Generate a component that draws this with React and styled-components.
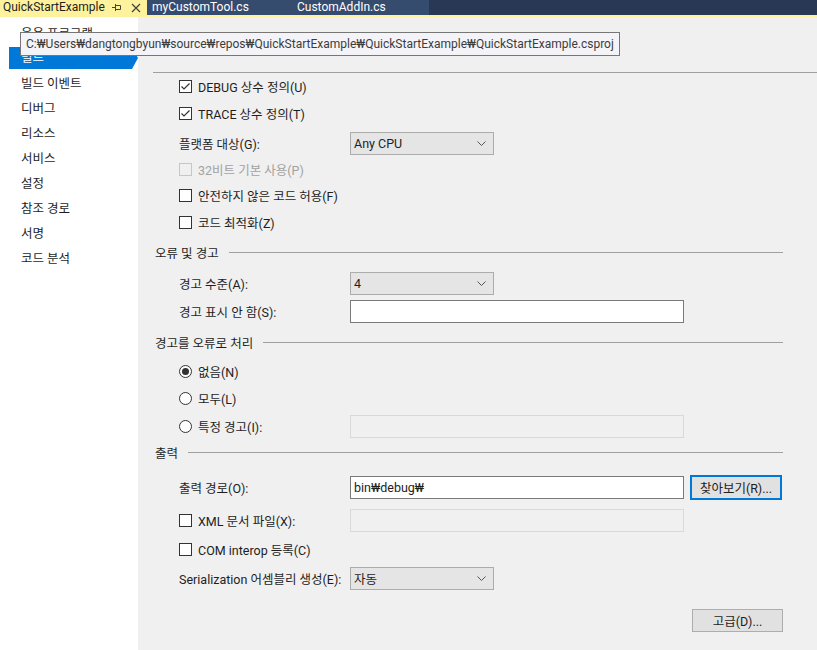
import React from "react";
import styled, { createGlobalStyle } from "styled-components";

const GlobalStyle = createGlobalStyle`
  html, body { margin: 0; padding: 0; }
  body {
    font-family: Roboto, "Noto Sans", "Noto Sans CJK KR", sans-serif;
    font-size: 12.5px;
    color: #1e1e1e;
    background: #f0f0f0;
  }
  * { box-sizing: border-box; }
`;

const Window = styled.div`
  width: 817px;
  height: 650px;
  position: relative;
  overflow: hidden;
  display: flex;
  flex-direction: column;
  background: #f0f0f0;
`;

/* ---------- document tabs ---------- */
const TabBar = styled.div`
  display: flex;
  height: 17px;
  background: #293955;
  border-bottom: 2px solid #fff29d;
`;

const Tab = styled.div`
  width: ${(p) => p.$w}px;
  height: 15px;
  display: flex;
  align-items: center;
  padding-left: ${(p) => p.$pl}px;
  font-size: 12px;
  line-height: 15px;
  white-space: nowrap;
  background: ${(p) => (p.$active ? "#fff29d" : "#364c6e")};
  color: ${(p) => (p.$active ? "#1e1e1e" : "#ffffff")};
`;

const TabIcons = styled.div`
  display: flex;
  align-items: center;
  gap: 10px;
  margin-left: auto;
  margin-right: 6px;
`;

const PinIcon = () => (
  <svg width="9" height="9" viewBox="0 0 9 9">
    <path d="M0 4.5H3M3.5 1V8M3.5 2.5H8.5V6.5H3.5" fill="none" stroke="#444" strokeWidth="1" />
  </svg>
);

const CloseIcon = () => (
  <svg width="10" height="10" viewBox="0 0 10 10">
    <path d="M1 1L9 9M9 1L1 9" stroke="#444" strokeWidth="1.3" />
  </svg>
);

/* ---------- body ---------- */
const Body = styled.div`
  flex: 1;
  display: flex;
  position: relative;
`;

const Sidebar = styled.nav`
  width: 138px;
  background: #ffffff;
  padding-top: 5px;
`;

const NavItem = styled.div`
  height: 22px;
  margin-bottom: 3px;
  line-height: 24px;
  padding-left: 21px;
  white-space: nowrap;
  color: ${(p) => (p.$active ? "#ffffff" : "#1e1e1e")};
  ${(p) =>
    p.$active &&
    `
    margin-left: 9px;
    padding-left: 12px;
    width: 129px;
    line-height: 22px;
    background: #0078d7;
    clip-path: polygon(0 0, calc(100% - 6px) 0, 100% 50%, calc(100% - 6px) 100%, 0 100%);
  `}
`;

const Tooltip = styled.div`
  position: absolute;
  left: 20px;
  top: 15px;
  height: 24px;
  padding: 0 5px;
  font-size: 12px;
  line-height: 22px;
  white-space: nowrap;
  background: #f4f4f8;
  border: 1px solid #767676;
  color: #3c3c3c;
`;

const Content = styled.main`
  flex: 1;
  padding: 0 34px 0 15px;
  display: flex;
  flex-direction: column;
`;

const TopRule = styled.div`
  margin-top: 55px;
  margin-right: -34px;
  height: 1px;
  background: #a0a0a0;
`;

const SectionHeader = styled.div`
  display: flex;
  align-items: center;
  height: 24px;
  margin-top: ${(p) => p.$mt}px;
  padding-left: 2px;
  white-space: nowrap;

  &::after {
    content: "";
    flex: 1;
    height: 1px;
    margin-left: 10px;
    background: #a0a0a0;
  }
`;

const Row = styled.div`
  display: flex;
  align-items: center;
  height: 24px;
  margin-top: ${(p) => p.$mt}px;
  padding-left: 26px;
`;

const Label = styled.div`
  flex: 0 0 171px;
  white-space: nowrap;
  display: flex;
  align-items: center;
  gap: 6px;
  color: ${(p) => (p.$disabled ? "#a2a2a2" : "#1e1e1e")};
`;

const Box = styled.span`
  width: 13px;
  height: 13px;
  flex: 0 0 13px;
  display: flex;
  align-items: center;
  justify-content: center;
  border: 1px solid ${(p) => (p.$disabled ? "#c6c6c6" : "#333333")};
  border-radius: ${(p) => (p.$round ? "50%" : "0")};
  background: ${(p) => (p.$disabled ? "#f0f0f0" : "#ffffff")};
`;

const Dot = styled.span`
  width: 7px;
  height: 7px;
  border-radius: 50%;
  background: #333333;
`;

const Check = ({ checked, disabled }) => (
  <Box $disabled={disabled}>
    {checked && (
      <svg width="11" height="11" viewBox="0 0 11 11">
        <path d="M1.5 5.5L4 8L9.5 2.5" fill="none" stroke="#333" strokeWidth="1.2" />
      </svg>
    )}
  </Box>
);

const Radio = ({ checked }) => <Box $round>{checked && <Dot />}</Box>;

const Select = styled.div`
  width: 144px;
  height: 23px;
  display: flex;
  align-items: center;
  justify-content: space-between;
  padding: 0 7px 0 3px;
  background: #e5e5e5;
  border: 1px solid #acacac;
`;

const Chevron = () => (
  <svg width="9" height="5" viewBox="0 0 9 5">
    <path d="M0.5 0.5L4.5 4.5L8.5 0.5" fill="none" stroke="#555" strokeWidth="1" />
  </svg>
);

const Input = styled.div`
  width: 334px;
  height: 23px;
  display: flex;
  align-items: center;
  padding-left: 3px;
  background: ${(p) => (p.$disabled ? "#f0f0f0" : "#ffffff")};
  border: 1px solid ${(p) => (p.$disabled ? "#d9d9d9" : "#7a7a7a")};
`;

const Button = styled.div`
  width: ${(p) => (p.$focused ? 92 : 91)}px;
  height: ${(p) => (p.$focused ? 25 : 23)}px;
  margin-left: ${(p) => p.$ml || 0}px;
  display: flex;
  align-items: center;
  justify-content: center;
  white-space: nowrap;
  background: #e1e1e1;
  border: ${(p) => (p.$focused ? "2px solid #0078d7" : "1px solid #adadad")};
`;

const ButtonRow = styled.div`
  display: flex;
  justify-content: flex-end;
  margin-top: 19px;
`;

const navItems = [
  "응용 프로그램",
  "빌드",
  "빌드 이벤트",
  "디버그",
  "리소스",
  "서비스",
  "설정",
  "참조 경로",
  "서명",
  "코드 분석",
];

const W = "₩";

export default function App() {
  return (
    <Window>
      <GlobalStyle />
      <TabBar>
        <Tab $active $w={147} $pl={3}>
          QuickStartExample
          <TabIcons>
            <PinIcon />
            <CloseIcon />
          </TabIcons>
        </Tab>
        <Tab $w={143} $pl={5}>myCustomTool.cs</Tab>
        <Tab $w={139} $pl={7}>CustomAddIn.cs</Tab>
      </TabBar>

      <Body>
        <Sidebar>
          {navItems.map((n) => (
            <NavItem key={n} $active={n === "빌드"}>
              {n}
            </NavItem>
          ))}
        </Sidebar>

        <Content>
          <TopRule />

          <Row $mt={1}>
            <Label><Check checked />DEBUG 상수 정의(U)</Label>
          </Row>
          <Row $mt={3}>
            <Label><Check checked />TRACE 상수 정의(T)</Label>
          </Row>
          <Row $mt={6}>
            <Label>플랫폼 대상(G):</Label>
            <Select>Any CPU<Chevron /></Select>
          </Row>
          <Row $mt={2}>
            <Label $disabled><Check disabled />32비트 기본 사용(P)</Label>
          </Row>
          <Row $mt={2}>
            <Label><Check />안전하지 않은 코드 허용(F)</Label>
          </Row>
          <Row $mt={3}>
            <Label><Check />코드 최적화(Z)</Label>
          </Row>

          <SectionHeader $mt={6}>오류 및 경고</SectionHeader>
          <Row $mt={7}>
            <Label>경고 수준(A):</Label>
            <Select>4<Chevron /></Select>
          </Row>
          <Row $mt={4}>
            <Label>경고 표시 안 함(S):</Label>
            <Input />
          </Row>

          <SectionHeader $mt={7}>경고를 오류로 처리</SectionHeader>
          <Row $mt={5}>
            <Label><Radio checked />없음(N)</Label>
          </Row>
          <Row $mt={3}>
            <Label><Radio />모두(L)</Label>
          </Row>
          <Row $mt={4}>
            <Label><Radio />특정 경고(I):</Label>
            <Input $disabled />
          </Row>

          <SectionHeader $mt={2}>출력</SectionHeader>
          <Row $mt={11}>
            <Label>출력 경로(O):</Label>
            <Input>bin{W}debug{W}</Input>
            <Button $focused $ml={6}>찾아보기(R)...</Button>
          </Row>
          <Row $mt={9}>
            <Label><Check />XML 문서 파일(X):</Label>
            <Input $disabled />
          </Row>
          <Row $mt={5}>
            <Label><Check />COM interop 등록(C)</Label>
          </Row>
          <Row $mt={5}>
            <Label>Serialization 어셈블리 생성(E):</Label>
            <Select>자동<Chevron /></Select>
          </Row>

          <ButtonRow>
            <Button>고급(D)...</Button>
          </ButtonRow>
        </Content>

        <Tooltip>
          C:{W}Users{W}dangtongbyun{W}source{W}repos{W}QuickStartExample{W}QuickStartExample{W}QuickStartExample.csproj
        </Tooltip>
      </Body>
    </Window>
  );
}
